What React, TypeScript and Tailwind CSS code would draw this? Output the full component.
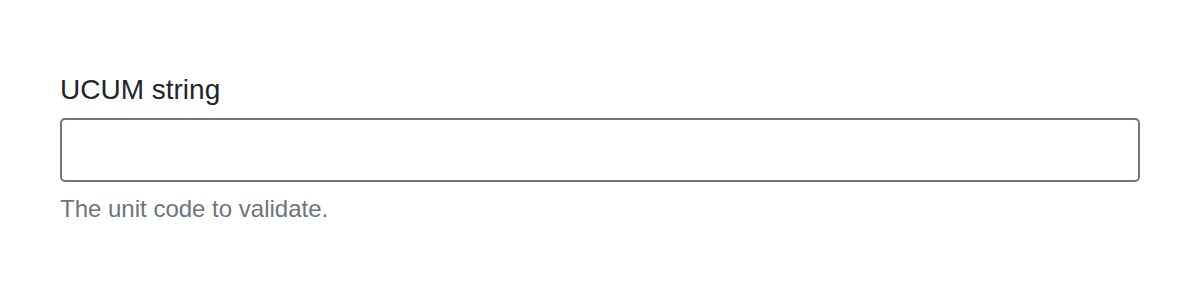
import React, { useState } from 'react';

const App: React.FC = () => {
  const [value, setValue] = useState('');

  return (
    <div className="min-h-[294px] bg-white px-[60px] pt-[70px] font-['Liberation_Sans',Arial,sans-serif]">
      <label htmlFor="ucum" className="mb-[8px] block text-[28px] leading-[40px] text-[#212529]">
        UCUM string
      </label>
      <input
        id="ucum"
        type="text"
        value={value}
        onChange={(e) => setValue(e.target.value)}
        className="block h-[64px] w-full rounded-[5px] border-[2px] border-[#767676] bg-white px-[20px] text-[27px] text-[#212529] outline-none"
      />
      <div className="mt-[9px] text-[24px] leading-[36px] text-[#6c757d]">The unit code to validate.</div>
    </div>
  );
};

export default App;
